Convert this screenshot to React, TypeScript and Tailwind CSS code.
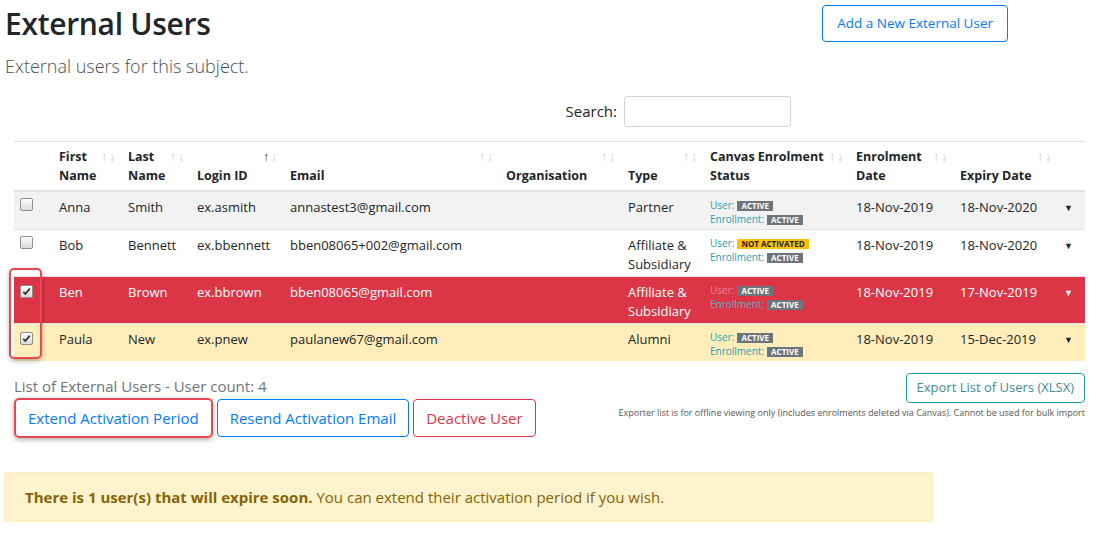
import React from 'react';

type Row = {
  first: string;
  last: string;
  login: string;
  email: string;
  type: string[];
  userStatus: 'ACTIVE' | 'NOT ACTIVATED';
  enrol: string;
  expiry: string;
  checked: boolean;
  tone: 'striped' | 'plain' | 'danger' | 'warning';
};

const ROWS: Row[] = [
  { first: 'Anna', last: 'Smith', login: 'ex.asmith', email: 'annastest3@gmail.com', type: ['Partner'], userStatus: 'ACTIVE', enrol: '18-Nov-2019', expiry: '18-Nov-2020', checked: false, tone: 'striped' },
  { first: 'Bob', last: 'Bennett', login: 'ex.bbennett', email: 'bben08065+002@gmail.com', type: ['Affiliate &', 'Subsidiary'], userStatus: 'NOT ACTIVATED', enrol: '18-Nov-2019', expiry: '18-Nov-2020', checked: false, tone: 'plain' },
  { first: 'Ben', last: 'Brown', login: 'ex.bbrown', email: 'bben08065@gmail.com', type: ['Affiliate &', 'Subsidiary'], userStatus: 'ACTIVE', enrol: '18-Nov-2019', expiry: '17-Nov-2019', checked: true, tone: 'danger' },
  { first: 'Paula', last: 'New', login: 'ex.pnew', email: 'paulanew67@gmail.com', type: ['Alumni'], userStatus: 'ACTIVE', enrol: '18-Nov-2019', expiry: '15-Dec-2019', checked: true, tone: 'warning' },
];

const HEADERS: { label: string[]; w: string; upDark?: boolean }[] = [
  { label: ['First', 'Name'], w: 'w-[69px]' },
  { label: ['Last', 'Name'], w: 'w-[69px]' },
  { label: ['Login ID'], w: 'w-[93px]', upDark: true },
  { label: ['Email'], w: 'w-[216px]' },
  { label: ['Organisation'], w: 'w-[122px]' },
  { label: ['Type'], w: 'w-[82px]' },
  { label: ['Canvas Enrolment', 'Status'], w: 'w-[146px]' },
  { label: ['Enrolment', 'Date'], w: 'w-[104px]' },
  { label: ['Expiry Date'], w: 'w-[104px]' },
];

const CheckBox: React.FC<{ checked: boolean }> = ({ checked }) => (
  <span className="inline-flex h-[13px] w-[13px] items-center justify-center rounded-[2px] border border-[#8f8f8f] bg-gradient-to-b from-[#fdfdfd] to-[#dcdcdc]">
    {checked && (
      <svg width="9" height="9" viewBox="0 0 9 9">
        <path d="M1.2 4.8 L3.4 7 L7.8 1.6" fill="none" stroke="#333" strokeWidth="1.8" />
      </svg>
    )}
  </span>
);

const Badge: React.FC<{ text: string }> = ({ text }) => (
  <span
    className={`ml-[3px] inline-block px-[4px] text-[8px] font-bold leading-[10px] ${
      text === 'ACTIVE' ? 'bg-[#6c757d] text-white' : 'bg-[#ffc107] text-[#212529]'
    }`}
  >
    {text}
  </span>
);

const App: React.FC = () => {
  return (
    <div className="h-[533px] w-[1097px] overflow-hidden bg-white text-[#212529]" style={{ fontFamily: '"Open Sans", "Noto Sans", sans-serif' }}>
      {/* page header */}
      <div className="flex items-start justify-between pl-[5px] pr-[89px]">
        <div>
          <h1 className="mt-[4px] text-[30px] font-semibold leading-[40px] tracking-[-0.3px]">External Users</h1>
          <p className="mt-[10px] text-[18px] font-light leading-[24px] text-[#495057]">External users for this subject.</p>
        </div>
        <button className="mt-[5px] h-[37px] rounded-[4px] border border-[#007bff] px-[14px] text-[13.5px] text-[#007bff]">
          Add a New External User
        </button>
      </div>

      {/* search */}
      <div className="mt-[18px] flex items-center justify-end gap-[7px] pr-[306px]">
        <span className="text-[15px]">Search:</span>
        <input className="h-[31px] w-[167px] rounded-[3px] border border-[#ced4da]" />
      </div>

      {/* table */}
      <div className="relative ml-[14px] mr-[12px] mt-[14px]">
        <table className="w-[1071px] table-fixed border-collapse text-[13px]">
          <thead>
            <tr className="border-t border-[#dee2e6]">
              <th className="w-[39px] border-b-2 border-[#dee2e6]" />
              {HEADERS.map((h) => (
                <th
                  key={h.label.join(' ')}
                  className={`${h.w} relative border-b-2 border-[#dee2e6] pb-[5px] pl-[6px] pt-[5px] text-left align-bottom text-[12.5px] font-bold leading-[19px]`}
                >
                  {h.label.map((l) => (
                    <div key={l}>{l}</div>
                  ))}
                  <span className="absolute right-[5px] top-[5px] text-[12px] leading-[19px] tracking-[2px] text-[#c8c8c8]">
                    <span className={h.upDark ? 'text-[#333]' : ''}>↑</span>↓
                  </span>
                </th>
              ))}
              <th className="w-[27px] border-b-2 border-[#dee2e6]" />
            </tr>
          </thead>
          <tbody>
            {ROWS.map((r) => {
              const bg =
                r.tone === 'striped'
                  ? 'bg-[#f2f2f2]'
                  : r.tone === 'danger'
                    ? 'bg-[#dc3545] text-white'
                    : r.tone === 'warning'
                      ? 'bg-[#ffeeba]'
                      : 'bg-white';
              const cell = 'pl-[6px] pt-[6px] pb-[3px] align-top leading-[19px]';
              return (
                <tr key={r.login} className={`${bg} border-t border-[#dee2e6]`}>
                  <td className="pl-[6px] pt-[5px] align-top leading-[19px]">
                    <CheckBox checked={r.checked} />
                  </td>
                  <td className={cell}>{r.first}</td>
                  <td className={cell}>{r.last}</td>
                  <td className={cell}>{r.login}</td>
                  <td className={cell}>{r.email}</td>
                  <td className={cell} />
                  <td className="pl-[6px] pt-[6px] pb-[3px] align-top leading-[18.5px]">
                    {r.type.map((t) => (
                      <div key={t}>{t}</div>
                    ))}
                  </td>
                  <td className="pl-[6px] pt-[6px] pb-[3px] align-top text-[10px] leading-[14px]">
                    <div>
                      <span className={r.tone === 'danger' ? 'text-[#e7829a]' : 'text-[#17a2b8]'}>User:</span>
                      <Badge text={r.userStatus} />
                    </div>
                    <div>
                      <span className={r.tone === 'danger' ? 'text-[#4fb3c2]' : 'text-[#17a2b8]'}>Enrollment:</span>
                      <Badge text="ACTIVE" />
                    </div>
                  </td>
                  <td className={cell}>{r.enrol}</td>
                  <td className={cell}>{r.expiry}</td>
                  <td className={`${cell} pl-[3px] text-[9px]`}>▼</td>
                </tr>
              );
            })}
          </tbody>
        </table>
        {/* highlight around selected checkboxes */}
        <div className="pointer-events-none absolute left-[-5px] top-[127px] h-[91px] w-[33px] rounded-[5px] border-2 border-[#ea4850] shadow-[0_2px_5px_rgba(0,0,0,0.3)]" />
      </div>

      {/* footer actions */}
      <div className="mt-[14px] flex items-start justify-between pl-[14px] pr-[12px]">
        <div>
          <div className="text-[15px] leading-[22px] text-[#6c757d]">List of External Users - User count: 4</div>
          <div className="mt-[1px] flex gap-[4px]">
            <button className="h-[40px] rounded-[5px] border-2 border-[#ea4850] px-[12px] text-[15px] text-[#007bff] shadow-[0_2px_5px_rgba(0,0,0,0.3)]">
              Extend Activation Period
            </button>
            <button className="h-[38px] self-center rounded-[4px] border border-[#007bff] px-[12px] text-[15px] text-[#007bff]">
              Resend Activation Email
            </button>
            <button className="h-[38px] self-center rounded-[4px] border border-[#dc3545] px-[12px] text-[15px] text-[#dc3545]">
              Deactive User
            </button>
          </div>
        </div>
        <div className="-mt-[2px] flex flex-col items-end">
          <button className="h-[30px] rounded-[4px] border border-[#17a2b8] px-[10px] text-[13px] text-[#3c8c9a]">
            Export List of Users (XLSX)
          </button>
          <div className="mt-[4px] text-[9px] leading-[12px] text-[#555]">
            Exporter list is for offline viewing only (includes enrolments deleted via Canvas). Cannot be used for bulk import
          </div>
        </div>
      </div>

      {/* alert */}
      <div className="ml-[4px] mt-[34px] w-[929px] rounded-[2px] border border-[#ffeeba] bg-[#fff3cd] px-[20px] py-[12px] text-[15px] leading-[24px] text-[#856404]">
        <span className="font-bold">There is 1 user(s) that will expire soon.</span> You can extend their activation period if you wish.
      </div>
    </div>
  );
};

export default App;
